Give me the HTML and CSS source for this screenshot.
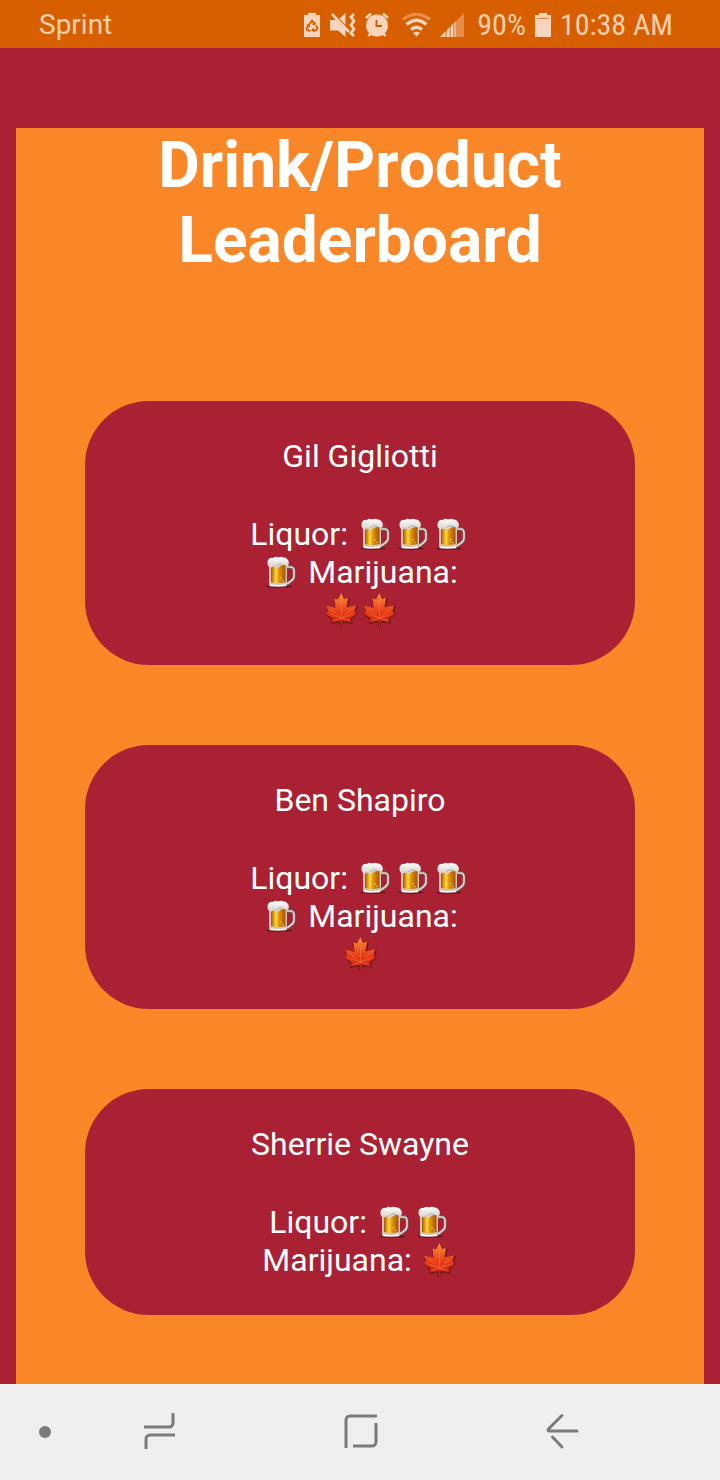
FILE: index.html
```html
<!DOCTYPE html>
<html lang="en">
<head>
  <meta charset="UTF-8">
  <meta name="viewport" content="width=device-width, initial-scale=1.0">
  <title>Drink/Product Leaderboard</title>
  <link rel="stylesheet" href="styles.css">
</head>
<body>
  <!-- shared emoji drawings -->
  <svg class="defs" aria-hidden="true">
    <defs>
      <linearGradient id="beer-fill" x1="0" x2="1" y1="0" y2="0">
        <stop offset="0" stop-color="#a0560a"/>
        <stop offset="0.15" stop-color="#d98c0c"/>
        <stop offset="0.35" stop-color="#ffdc3c"/>
        <stop offset="0.5" stop-color="#e8a012"/>
        <stop offset="0.75" stop-color="#c87408"/>
        <stop offset="1" stop-color="#a0560a"/>
      </linearGradient>
      <linearGradient id="foam-fill" x1="0" x2="0" y1="0" y2="1">
        <stop offset="0" stop-color="#ffffff"/>
        <stop offset="1" stop-color="#d2cbc2"/>
      </linearGradient>
      <linearGradient id="leaf-fill" x1="0" x2="0" y1="0" y2="1">
        <stop offset="0" stop-color="#f8973a"/>
        <stop offset="0.4" stop-color="#f05a22"/>
        <stop offset="0.7" stop-color="#e53616"/>
        <stop offset="1" stop-color="#c8260f"/>
      </linearGradient>
    </defs>
    <symbol id="beer" viewBox="0 0 38 38">
      <ellipse cx="17" cy="33.500" rx="13" ry="1.500" fill="#6e1420"/>
      <path d="M25 14h3.500q3.500 0 3.500 4v5q0 3-3 5l-4 3" fill="none" stroke="#756a68" stroke-width="3"/>
      <path d="M25 14h3.500q3.500 0 3.500 4v5q0 3-3 5l-4 3" fill="none" stroke="#e3dad5" stroke-width="1.600"/>
      <path d="M7 11h18v20q0 2.500-2 2.500H9q-2 0-2-2.500z" fill="#cfc4b8"/>
      <path d="M9 12h14.500v17q-7 2-14.500 0z" fill="url(#beer-fill)"/>
      <circle cx="19" cy="25" r="0.700" fill="#ffe27a"/>
      <circle cx="21" cy="27.500" r="0.700" fill="#ffe27a"/>
      <path d="M8 32q8 1.500 16 0" fill="none" stroke="#fff" stroke-width="1.500"/>
      <path d="M7 14Q4.500 11 6 7Q8 4 11 5Q13 3 16 4.500Q19 3 21.500 4.500Q24 4 25.500 6.500Q28 9 26 13Q23.500 12 21 12Q18 12 16.500 14.500Q14 16.500 13 14Q11 13 9.500 14.500Q8 15 7 14z" fill="url(#foam-fill)"/>
      <path d="M14 13q4-4 8-1" fill="none" stroke="#aaa19a" stroke-width="0.800"/>
    </symbol>
    <symbol id="leaf" viewBox="0 0 38 38">
      <path d="M20 3.500l3 6 4-1.500-1.500 9 3.500-1 6-.500-1.500 5 1.500 2.500-5.500 4.500 .500 4.500-8-1-2 .500v4h-1.500v-4l-2-.500-7 1.500 .500-4.500-5.500-4.500 1.500-3-1.500-4 6 .500 3.500 1-1.500-9 4 1.500z" fill="#7c1719" stroke="#7c1719" stroke-width="1.400" stroke-linejoin="round"/>
      <path d="M19.500 2l2.500 6 4-1-1.500 9.500 4-1 5.500-1-1.500 5.500 2 3-6 4 1 4.500-8-1.500-2 1-2-1-8 1.500 1-4.500-6.500-4 2-3.500-2-4.500 6 1 3.500 1-1-9.500 3.500 1z" fill="url(#leaf-fill)"/>
      <path d="M19.500 27.500V10M19.500 27.500l10-9M19.500 27.500l-10-9M19.500 27.500l11-4.500M19.500 27.500l-11-4.500M19.500 27.500l8 2M19.500 27.500l-8 2" stroke="#fb9550" stroke-width="0.700" opacity="0.650"/>
      <path d="M19.500 28v7.500" stroke="#c22c18" stroke-width="1.300"/>
    </symbol>
  </svg>

  <header class="status-bar">
    <span class="carrier">Sprint</span>
    <div class="indicators">
      <svg width="17" height="24" viewBox="0 0 17 24" role="img" aria-label="Power saving">
        <path d="M0 2h4V0h8v2h4v22H0z" fill="#f9d5bd"/>
        <path d="M5.500 11l2.500-3.500 2.500 3.500M12 12.500l1.500 3-1.500 2H9M6.500 17.500h-3l-1-2 2-3.500" fill="none" stroke="#d85f00" stroke-width="1.800"/>
        <path d="M11.500 8v4H8zM10 14.500v5l-3-2.500zM2 11.500l4-.500v4z" fill="#d85f00"/>
      </svg>
      <svg width="26" height="24" viewBox="0 0 26 24" role="img" aria-label="Muted, vibrate">
        <path d="M0 7h6l9.500 9.500V24L8 17.500H0zM9.500 5.500L15.500 0v12z" fill="#f9d5bd"/>
        <path d="M2 1l17 18" stroke="#f9d5bd" stroke-width="2.600"/>
        <path d="M24 1l-3 3 3 4-3 4 3 4-3 4 3 3" fill="none" stroke="#f9d5bd" stroke-width="2.800"/>
      </svg>
      <svg width="24" height="24" viewBox="0 0 24 24" role="img" aria-label="Alarm set">
        <circle cx="12" cy="12.500" r="11" fill="#f9d5bd"/>
        <path d="M1 5l5-4.500M23 5l-5-4.500M6 20l-2.500 3M18 20l2.500 3" stroke="#f9d5bd" stroke-width="2.600"/>
        <path d="M11.500 7v6H17" fill="none" stroke="#d85f00" stroke-width="2"/>
      </svg>
      <svg width="33" height="24" viewBox="0 0 33 24" role="img" aria-label="Wi-Fi">
        <g fill="none" stroke="#f9d5bd" stroke-width="3.400">
          <path d="M5 6.500q13.500-10.500 27 0" opacity="0.400"/>
          <path d="M8.500 11.500q10-8.500 20 0M13 16.500q5.500-4.500 11 0"/>
        </g>
        <path d="M15 20q3.500-2.500 7 0l-3.500 3.500z" fill="#f9d5bd"/>
      </svg>
      <svg width="28" height="24" viewBox="0 0 28 24" role="img" aria-label="Mobile signal">
        <path d="M0 24L24 0v24z" fill="#f9d5bd" opacity="0.400"/>
        <path d="M0 24l5.500-5.500V24zM7 17l2.500-2.500V24H7zM11 13l2-2v13h-2zM14.500 9.500l1-1V24h-1z" fill="#f9d5bd"/>
      </svg>
      <span>90%</span>
      <svg width="16" height="24" viewBox="0 0 16 24" role="img" aria-label="Battery">
        <path d="M0 2h4V0h8v2h4v22H0z" fill="#f9d5bd"/>
        <path d="M2 5.500h12" stroke="#d85f00" stroke-width="1" opacity="0.700"/>
      </svg>
      <time>10:38 AM</time>
    </div>
  </header>

  <main>
    <section class="leaderboard">
      <h1>Drink/Product Leaderboard</h1>
      <div class="cards">
        <article class="card">
          <h2>Gil Gigliotti</h2>
          <p>Liquor: <svg class="emoji"><use href="#beer"/></svg><svg class="emoji"><use href="#beer"/></svg><svg class="emoji"><use href="#beer"/></svg><svg class="emoji"><use href="#beer"/></svg> Marijuana: <svg class="emoji"><use href="#leaf"/></svg><svg class="emoji"><use href="#leaf"/></svg></p>
        </article>
        <article class="card">
          <h2>Ben Shapiro</h2>
          <p>Liquor: <svg class="emoji"><use href="#beer"/></svg><svg class="emoji"><use href="#beer"/></svg><svg class="emoji"><use href="#beer"/></svg><svg class="emoji"><use href="#beer"/></svg> Marijuana: <svg class="emoji"><use href="#leaf"/></svg></p>
        </article>
        <article class="card">
          <h2>Sherrie Swayne</h2>
          <p>Liquor: <svg class="emoji"><use href="#beer"/></svg><svg class="emoji"><use href="#beer"/></svg> Marijuana: <svg class="emoji"><use href="#leaf"/></svg></p>
        </article>
      </div>
    </section>
  </main>

  <nav class="nav-bar">
    <button class="nav-dot" type="button" aria-label="Hide navigation bar">
      <svg width="12" height="12" viewBox="0 0 12 12"><circle cx="6" cy="6" r="6" fill="#7b7b7b"/></svg>
    </button>
    <button type="button" aria-label="Recent apps">
      <svg class="nav-icon" viewBox="0 0 40 40"><path d="M34 1v10a4 4 0 0 1-4 4H5M36 23H11a4 4 0 0 0-4 4v10"/></svg>
    </button>
    <button type="button" aria-label="Home">
      <svg class="nav-icon" viewBox="0 0 40 40"><path d="M5 36V8a4 4 0 0 1 4-4h27M35 11v19a4 4 0 0 1-4 4H12"/></svg>
    </button>
    <button type="button" aria-label="Back">
      <svg class="nav-icon" viewBox="0 0 40 40"><path stroke-linecap="round" d="M20 3.500L6.500 17Q5 19 8 19h27M10.500 25l9.500 10"/></svg>
    </button>
  </nav>
</body>
</html>
```
FILE: styles.css
```css
* {
  margin: 0;
  padding: 0;
  box-sizing: border-box;
}

body {
  display: flex;
  flex-direction: column;
  min-height: 100vh;
  background: #aa2133;
  color: white;
  font-family: Roboto, Arial, sans-serif;
}

.defs {
  position: absolute;
  width: 0;
  height: 0;
}

.status-bar {
  display: flex;
  align-items: center;
  justify-content: space-between;
  height: 48px;
  padding: 1px 47px 0 39px;
  background: #d85f00;
  color: #fcd0ad;
  font-size: 28px;
  line-height: 32px;
}

.indicators {
  display: flex;
  align-items: center;
  gap: 9px;
  font-family: "Roboto Condensed", Roboto, sans-serif;
  font-size: 30px;
}

main {
  flex: 1;
  display: flex;
  padding: 80px 16px 0;
}

.leaderboard {
  flex: 1;
  background: #f98728;
  text-align: center;
}

h1 {
  max-width: 480px;
  margin: 0 auto 123px;
  font-size: 64px;
  font-weight: 700;
  font-kerning: none;
  line-height: 75px;
}

.cards {
  display: flex;
  flex-direction: column;
  gap: 80px;
  padding: 0 10%;
}

.card {
  padding: 36px 30%;
  border-radius: 64px;
  background: #aa2133;
  font-size: 32px;
  line-height: 38px;
}

.card h2 {
  margin-bottom: 40px;
  font-size: 32px;
  font-weight: 400;
}

.emoji {
  width: 38px;
  height: 38px;
  vertical-align: top;
}

.nav-bar {
  display: flex;
  align-items: center;
  height: 96px;
  padding: 0 57px 0 32px;
  background: #efefef;
}

.nav-bar button {
  flex: 1;
  display: flex;
  align-items: center;
  justify-content: center;
  height: 96px;
  border: none;
  background: none;
  cursor: pointer;
}

.nav-bar .nav-dot {
  flex: 0 0 26px;
}

.nav-icon {
  width: 40px;
  height: 40px;
  fill: none;
  stroke: #7b7b7b;
  stroke-width: 3;
}
```
